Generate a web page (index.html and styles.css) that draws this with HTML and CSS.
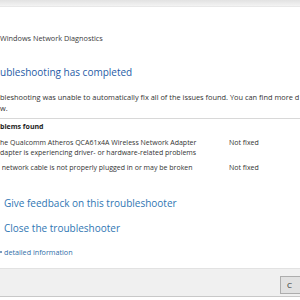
FILE: index.html
```html
<!DOCTYPE html>
<html lang="en">
<head>
    <meta charset="UTF-8">
    <title>Windows Network Diagnostics</title>
    <link rel="stylesheet" href="styles.css">
</head>
<body>
    <div class="top-bar"></div>

    <div class="content">
        <p class="title">Windows Network Diagnostics</p>

        <h1 class="heading">ubleshooting has completed</h1>

        <p class="intro">bleshooting was unable to automatically fix all of the issues found. You can find more d<br>w.</p>

        <div class="problems">
            <div class="problems-head">blems found</div>

            <div class="row">
                <div>he Qualcomm Atheros QCA61x4A Wireless Network Adapter<br>dapter is experiencing driver- or hardware-related problems</div>
                <div>Not fixed</div>
            </div>

            <div class="row">
                <div>&nbsp;network cable is not properly plugged in or may be broken</div>
                <div>Not fixed</div>
            </div>
        </div>

        <div class="links">
            <div class="link">Give feedback on this troubleshooter</div>
            <div class="link">Close the troubleshooter</div>
            <div class="small-link"><span class="dot"></span>detailed information</div>
        </div>
    </div>

    <!-- 하단 버튼 영역 -->
    <div class="footer">
        <div class="btn">C</div>
    </div>
</body>
</html>
```
FILE: styles.css
```css
body{
    margin: 0;
    width: 300px;
    height: 300px;
    overflow: hidden;
    background-color: #ffffff;
    font-family: "Open Sans", "Noto Sans", sans-serif;
    color: #333333;
}

.top-bar{
    height: 6px;
    background: linear-gradient(#e2e2e2, #f3f3f3);
    border-bottom: 1px solid #e8e8e8;
}

.content{
    white-space: nowrap;
    overflow: hidden;
}

.title{
    margin: 25px 0 0 0;
    font-size: 7.3px;
    line-height: 12px;
    color: #3a3a3a;
}

.heading{
    margin: 20px 0 0 0;
    font-size: 10px;
    line-height: 16px;
    font-weight: normal;
    color: #1f5ba6;
}

.intro{
    margin: 12px 0 0 0;
    font-size: 7.4px;
    line-height: 11px;
}

.problems{
    margin-top: 4px;
    border-top: 1px solid #d8d8d8;
    padding-top: 2px;
    font-size: 7px;
}

.problems-head{
    line-height: 11px;
    font-weight: bold;
    color: #222222;
}

.row{
    display: grid;
    grid-template-columns: 229px 1fr;
    line-height: 10px;
    margin-top: 6px;
}

.row + .row{
    margin-top: 5px;
}

.links{
    margin-top: 23px;
}

.link{
    font-size: 10px;
    line-height: 14px;
    padding-left: 4px;
    color: #2f76b3;
}

.link + .link{
    margin-top: 11px;
}

.small-link{
    margin-top: 12px;
    font-size: 7.2px;
    line-height: 10px;
    color: #2f6ea8;
    display: flex;
    align-items: center;
    gap: 2px;
}

.dot{
    width: 2px;
    height: 2px;
    background-color: #7a9cc0;
}

.footer{
    margin-top: 11px;
    height: 27px;
    background-color: #f0f0f0;
    border-top: 1px solid #e2e2e2;
    border-bottom: 1px solid #c8c8c8;
    display: flex;
    justify-content: flex-end;
    align-items: flex-start;
}

.btn{
    margin-top: 7px;
    width: 20px;
    height: 18px;
    box-sizing: border-box;
    background-color: #e1e1e1;
    border: 1px solid #adadad;
    border-right: none;
    font-size: 8px;
    line-height: 16px;
    padding-left: 6px;
    color: #333333;
}
```
